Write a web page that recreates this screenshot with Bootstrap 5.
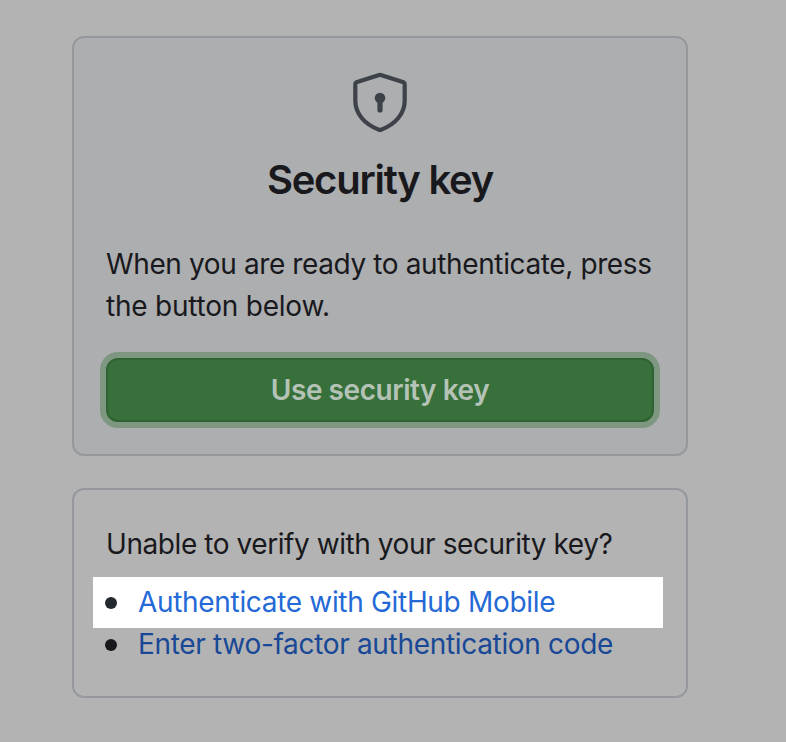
<!DOCTYPE html>
<html lang="en">
<head>
<meta charset="utf-8">
<meta name="viewport" content="width=device-width, initial-scale=1">
<title>Security key</title>
<link rel="stylesheet" href="https://cdn.jsdelivr.net/npm/bootstrap@5.3.0/dist/css/bootstrap.min.css">
<style>
body{background:#b3b3b3;font-family:Inter,sans-serif;color:#19191d;font-size:28px;line-height:42px}
main{width:616px;margin-left:72px;padding-top:36px}
.panel{border:2px solid #95999d;border-radius:12px;padding:0 32px}
.key-panel{background:#acaeb0;height:420px;margin-bottom:32px}
.alt-panel{height:210px;padding-top:33px}
.shield{display:block;width:64px;height:64px;margin:32px auto 0;color:#3d4249}
h1{font-size:40px;line-height:60px;font-weight:600;letter-spacing:-1.25px;margin:16px 0 33px}
.copy{letter-spacing:-.38px}
.copy-end{letter-spacing:-.22px}
.question{letter-spacing:-.43px}
.btn-key,.btn-key:hover{height:64px;margin-top:31px;border:2px solid #2e6233;border-radius:12px;background:#37703b;color:#b5c3b6;font-size:28px;font-weight:600;letter-spacing:-.45px;box-shadow:0 0 0 6px #7d9781}
.options{margin-top:12px}
.options li{display:flex;align-items:center;letter-spacing:-.32px}
.options li::before{content:"";width:12px;height:12px;border-radius:50%;background:#19191d;margin:2px 21px 0 -1px}
.options a{color:#184896}
.options .spot{background:#fff;margin:0 -9px -5px -13px;padding:4px 0 5px 13px;height:51px}
.options .spot::before{background:#24292f}
.options .spot a{color:#2469d6}
</style>
</head>
<body>
<main>
<section class="panel key-panel">
<svg class="shield" viewBox="0 0 64 64" fill="none" stroke="currentColor" stroke-width="4.2" stroke-linejoin="round" stroke-linecap="round" aria-hidden="true"><path d="M31.2 5 8.4 12.2Q7.3 12.6 7.3 14V30.5C7.3 43.5 16.5 54.5 31 59.7Q32 60.1 33 59.7C47.5 54.5 56.7 43.5 56.7 30.5V14Q56.7 12.6 55.6 12.2L32.8 5Q32 4.8 31.2 5Z"/><circle cx="32" cy="28" r="5.3" fill="currentColor" stroke="none"/><path d="M32 29V40" stroke-width="5.2"/></svg>
<h1 class="text-center">Security key</h1>
<p class="copy mb-0 text-nowrap">When you are ready to authenticate, press<br><span class="copy-end">the button below.</span></p>
<button type="button" class="btn btn-key w-100">Use security key</button>
</section>
<section class="panel alt-panel">
<p class="question mb-0">Unable to verify with your security key?</p>
<ul class="options list-unstyled mb-0">
<li class="spot"><a class="text-decoration-none" href="#">Authenticate with GitHub Mobile</a></li>
<li><a class="text-decoration-none" href="#">Enter two-factor authentication code</a></li>
</ul>
</section>
</main>
<script src="https://cdn.jsdelivr.net/npm/bootstrap@5.3.0/dist/js/bootstrap.bundle.min.js"></script>
</body>
</html>
